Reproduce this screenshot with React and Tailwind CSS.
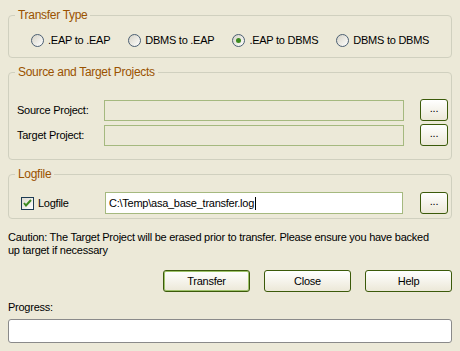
import React from 'react';

const font = { fontFamily: '"Liberation Sans", Arial, sans-serif' };

function Radio({ label, checked }) {
  return (
    <div className="flex items-center gap-[4px] whitespace-nowrap">
      <div className="flex h-[13px] w-[13px] items-center justify-center rounded-full border border-[#4b5f73] bg-gradient-to-br from-[#d6d3c6] to-white">
        {checked && <div className="h-[5px] w-[5px] rounded-full bg-[#3d8a1f]" />}
      </div>
      <span>{label}</span>
    </div>
  );
}

function Browse() {
  return (
    <button className="flex h-[22px] w-[28px] items-center justify-center rounded-[3px] border border-[#3b5a0a] bg-gradient-to-b from-white to-[#ece8d8] pb-[3px] text-[11px] leading-none">
      ...
    </button>
  );
}

function Group({ title, className = '', children }) {
  return (
    <fieldset className={`mx-[8px] rounded-[4px] border border-[#d0d0bf] ${className}`}>
      <legend className="ml-[6px] px-[3px] text-[12px] leading-[13px] tracking-[-0.3px] text-[#9a5200]">{title}</legend>
      {children}
    </fieldset>
  );
}

function Btn({ label, def }) {
  return (
    <button
      className={`h-[22px] w-[87px] rounded-[3px] border border-[#3b5a0a] bg-gradient-to-b from-white to-[#ece8d8] text-[11px] tracking-[-0.25px] ${def ? 'shadow-[inset_0_0_0_1px_#9ec26a]' : ''}`}
    >
      {label}
    </button>
  );
}

export default function App() {
  return (
    <div className="h-[351px] w-[460px] overflow-hidden bg-[#ece9d8] text-[11px] tracking-[-0.25px] text-black" style={font}>
      <Group title="Transfer Type" className="mt-[9px] h-[49px]">
        <div className="mt-[10px] flex gap-[18px] pl-[22px]">
          <Radio label=".EAP to .EAP" />
          <Radio label="DBMS to .EAP" />
          <Radio label=".EAP to DBMS" checked />
          <Radio label="DBMS to DBMS" />
        </div>
      </Group>

      <Group title="Source and Target Projects" className="mt-[8px] h-[94px]">
        <div className="mt-[20px] flex flex-col gap-[3px] pl-[8px]">
          <div className="flex items-center">
            <span className="w-[87px]">Source Project:</span>
            <div className="h-[21px] w-[300px] border border-[#a5b97f]" />
            <div className="ml-[16px]"><Browse /></div>
          </div>
          <div className="flex items-center">
            <span className="w-[87px]">Target Project:</span>
            <div className="h-[21px] w-[300px] border border-[#a5b97f]" />
            <div className="ml-[16px]"><Browse /></div>
          </div>
        </div>
      </Group>

      <Group title="Logfile" className="mt-[8px] h-[51px]">
        <div className="mt-[11px] flex items-center pl-[12px]">
          <div className="flex h-[13px] w-[13px] items-center justify-center border border-[#1c3a52] bg-gradient-to-br from-[#dcdad0] to-white">
            <svg width="9" height="8" viewBox="0 0 9 8">
              <path d="M1 4 L3 6.5 L8 1" fill="none" stroke="#3d8a1f" strokeWidth="2" />
            </svg>
          </div>
          <span className="ml-[4px] w-[67px]">Logfile</span>
          <div className="flex h-[22px] w-[298px] items-center border border-[#a5b97f] bg-white pl-[3px]">
            C:\Temp\asa_base_transfer.log<span className="ml-[1px] inline-block h-[13px] w-[1px] bg-black" />
          </div>
          <div className="ml-[17px]"><Browse /></div>
        </div>
      </Group>

      <p className="mx-[8px] mt-[12px] pr-[10px] leading-[13px]">
        Caution: The Target Project will be erased prior to transfer. Please ensure you have backed up target if necessary
      </p>

      <div className="mr-[8px] mt-[13px] flex justify-end gap-[14px]">
        <Btn label="Transfer" def />
        <Btn label="Close" />
        <Btn label="Help" />
      </div>

      <div className="mx-[8px] mt-[9px] leading-[13px]">Progress:</div>
      <div className="mx-[8px] mt-[5px] h-[24px] rounded-[3px] border border-[#8a8a8a] bg-white" />
    </div>
  );
}
